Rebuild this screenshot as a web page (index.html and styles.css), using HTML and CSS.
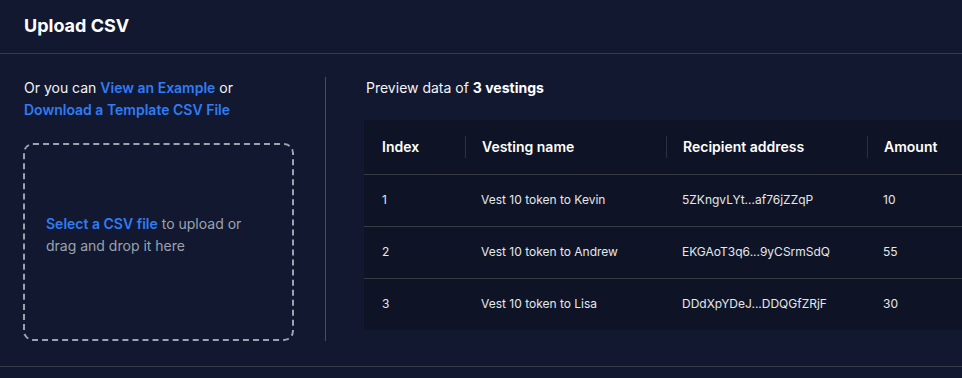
FILE: index.html
```html
<!DOCTYPE html>
<html lang="en">
<head>
  <meta charset="UTF-8">
  <title>Upload CSV</title>
  <link rel="stylesheet" href="styles.css">
</head>
<body>

<div class="upload-panel">
  <div class="panel-header">
    <h2>Upload CSV</h2>
  </div>

  <div class="panel-body">
    <div class="left-col">
      <p class="hint">Or you can <a href="#">View an Example</a> or <a href="#">Download a Template CSV File</a></p>
      <div class="dropzone">
        <p><a href="#">Select a CSV file</a> to upload or drag and drop it here</p>
      </div>
    </div>

    <div class="right-col">
      <p class="preview-title">Preview data of <b>3 vestings</b></p>
      <table class="preview-table">
        <thead>
          <tr>
            <th class="col-index">Index</th>
            <th class="col-name"><span>Vesting name</span></th>
            <th class="col-addr"><span>Recipient address</span></th>
            <th class="col-amount"><span>Amount</span></th>
          </tr>
        </thead>
        <tbody>
          <tr>
            <td>1</td>
            <td>Vest 10 token to Kevin</td>
            <td>5ZKngvLYt...af76jZZqP</td>
            <td>10</td>
          </tr>
          <tr>
            <td>2</td>
            <td>Vest 10 token to Andrew</td>
            <td>EKGAoT3q6...9yCSrmSdQ</td>
            <td>55</td>
          </tr>
          <tr>
            <td>3</td>
            <td>Vest 10 token to Lisa</td>
            <td>DDdXpYDeJ...DDQGfZRjF</td>
            <td>30</td>
          </tr>
        </tbody>
      </table>
    </div>
  </div>
</div>

</body>
</html>
```

FILE: styles.css
```css
body {
  font-family: 'Inter', 'Liberation Sans', sans-serif;
  background: #121830;
  color: #e5e7eb;
  margin: 0;
  overflow: hidden;
}

a {
  color: #2f7cf6;
  font-weight: 600;
  text-decoration: none;
}

.panel-header {
  height: 53px;
  padding: 0 24px;
  display: flex;
  align-items: center;
  border-bottom: 1px solid #383c4a;
}

.panel-header h2 {
  margin: 0 0 3px;
  font-size: 18px;
  font-weight: 700;
  color: #fff;
}

.panel-body {
  display: flex;
  padding: 23px 0 25px 24px;
  border-bottom: 1px solid #383c4a;
}

/* left side */
.left-col {
  flex: none;
  width: 277px;
  padding-right: 24px;
  border-right: 1px solid #474d5e;
}

.hint {
  margin: 0;
  font-size: 14px;
  line-height: 22px;
  color: #f3f4f6;
}

.dropzone {
  margin: 22px 0 0 -1px;
  width: 226px;
  height: 180px;
  padding: 0 20px 14px 21px;
  border: 2px dashed #9ca3af;
  border-radius: 10px;
  display: flex;
  align-items: center;
}

.dropzone p {
  margin: 0;
  font-size: 14px;
  line-height: 22px;
  color: #9ca3af;
}

/* right side */
.right-col {
  flex: 1;
  padding-left: 38px;
  overflow: hidden;
}

.preview-title {
  margin: 0 0 0 2px;
  font-size: 14px;
  line-height: 22px;
  color: #f3f4f6;
}

.preview-title b {
  font-weight: 700;
  color: #fff;
}

.preview-table {
  margin-top: 21px;
  width: 700px;
  table-layout: fixed;
  border-collapse: collapse;
  background: #0e1426;
}

.col-index { width: 83px; }
.col-name { width: 201px; }
.col-addr { width: 201px; }

.preview-table th {
  text-align: left;
  font-size: 14px;
  font-weight: 600;
  color: #fff;
  padding: 16px 0 16px 18px;
  line-height: 22px;
  border-bottom: 1px solid #3a3b40;
}

.preview-table th span {
  display: inline-block;
  line-height: 22px;
  padding-left: 16px;
  border-left: 1px solid #2c3142;
}

.preview-table th + th {
  padding-left: 0;
}

.preview-table td {
  font-size: 12px;
  line-height: 22px;
  padding: 14px 0 15px 18px;
  color: #e5e7eb;
  border-bottom: 1px solid #3a3b40;
}

.preview-table td + td {
  padding-left: 16px;
}

.preview-table tr:last-child td {
  border-bottom: none;
}
```
